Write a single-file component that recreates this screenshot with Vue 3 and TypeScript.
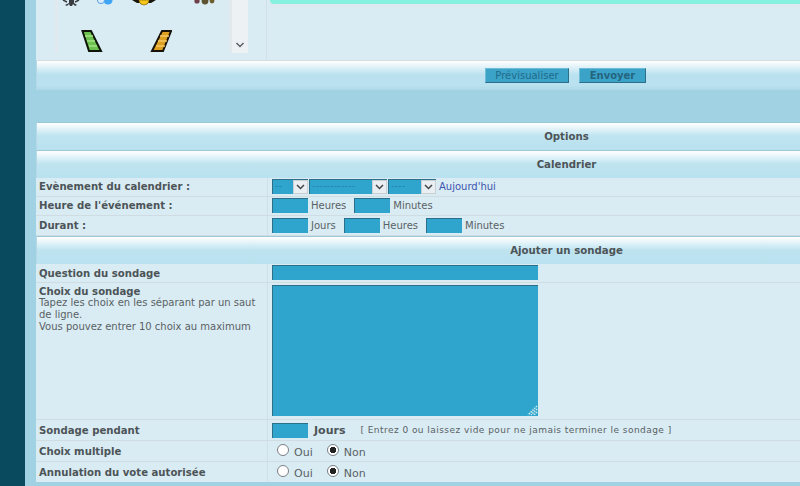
<template>
  <div class="page">
    <aside class="strip"></aside>
    <main class="main">
      <section class="top">
        <div class="smilies">
          <div class="list">
            <div class="icons clipped">
              <svg width="18" height="6" viewBox="0 0 18 6"><path d="M7 0h5v3l3 2-2 1-2-2-1 2H8L7 4 5 6 3 5l4-2z" fill="#3a3d40" /><path d="M1 0l4 2M17 0l-4 2" stroke="#3a3d40" stroke-width="1.4" /></svg>
              <svg class="i2" width="16" height="6" viewBox="0 0 16 6"><circle cx="11" cy="0" r="4.6" fill="#3ea6f5" /><circle cx="4" cy="0" r="3.6" fill="#d8ecfb" stroke="#5a9fe6" /></svg>
              <svg class="i3" width="24" height="6" viewBox="0 0 24 6"><path d="M0 0h24l-5 3H5z" fill="#17140a" /><path d="M7 0h10v1q-1 4-5 4t-5-4z" fill="#f6c81c" stroke="#7a5c08" stroke-width=".7" /></svg>
              <svg class="i4" width="22" height="5" viewBox="0 0 22 5"><circle cx="4" cy="1" r="2.6" fill="#70404a" /><circle cx="12" cy="1" r="3.4" fill="#5d5232" /><circle cx="19" cy="1" r="2.4" fill="#6d5f2c" /></svg>
            </div>
            <div class="icons bars">
              <svg width="22" height="22" viewBox="0 0 22 22">
                <path d="M1.500 1H10L20 21H8z" fill="#6cc04e" stroke="#0e1508" stroke-width="2" />
                <path d="M4 6h8M6 11h8M8 16h8" stroke="#a5e388" stroke-width="1.500" />
              </svg>
              <svg class="b2" width="22" height="22" viewBox="0 0 22 22">
                <path d="M12 1h9L13 21H2z" fill="#dd9f20" stroke="#17120a" stroke-width="2" />
                <path d="M10 6h9M8 11h9M6 16h9" stroke="#f4c765" stroke-width="1.500" />
              </svg>
            </div>
          </div>
          <div class="scroll">
            <svg width="10" height="6" viewBox="0 0 10 6"><path d="M1.500 1 5 4.500 8.500 1" fill="none" stroke="#596168" stroke-width="1.500" /></svg>
          </div>
        </div>
        <div class="top-right"><div class="teal"></div></div>
      </section>

      <section class="actions">
        <button class="btn">Prévisualiser</button>
        <button class="btn send">Envoyer</button>
      </section>

      <div class="gap"></div>

      <h3 class="head">Options</h3>
      <h3 class="head">Calendrier</h3>

      <div class="row r19 up">
        <label class="lab">Evènement du calendrier :</label>
        <div class="val">
          <span class="sel w36"><i>--</i><b><svg width="9" height="6" viewBox="0 0 9 6"><path d="M1 1l3.500 3.500L8 1" fill="none" stroke="#444" stroke-width="1.500" /></svg></b></span>
          <span class="sel w78"><i>------------</i><b><svg width="9" height="6" viewBox="0 0 9 6"><path d="M1 1l3.500 3.500L8 1" fill="none" stroke="#444" stroke-width="1.500" /></svg></b></span>
          <span class="sel w48"><i>----</i><b><svg width="9" height="6" viewBox="0 0 9 6"><path d="M1 1l3.500 3.500L8 1" fill="none" stroke="#444" stroke-width="1.500" /></svg></b></span>
          <a class="today">Aujourd'hui</a>
        </div>
      </div>
      <div class="row r19 up">
        <label class="lab">Heure de l'événement :</label>
        <div class="val">
          <span class="inp"></span><span class="txt">Heures</span>
          <span class="inp after"></span><span class="txt">Minutes</span>
        </div>
      </div>
      <div class="row r20">
        <label class="lab">Durant :</label>
        <div class="val">
          <span class="inp"></span><span class="txt">Jours</span>
          <span class="inp after"></span><span class="txt">Heures</span>
          <span class="inp after"></span><span class="txt">Minutes</span>
        </div>
      </div>

      <h3 class="head">Ajouter un sondage</h3>

      <div class="row r19">
        <label class="lab">Question du sondage</label>
        <div class="val"><span class="inp wide"></span></div>
      </div>
      <div class="row r137">
        <div class="lab stack">
          <label>Choix du sondage</label>
          <p>Tapez les choix en les séparant par un saut<br />de ligne.<br />Vous pouvez entrer 10 choix au maximum</p>
        </div>
        <div class="val top-val">
          <span class="area">
            <svg class="grip" width="11" height="11" viewBox="0 0 11 11"><path d="M10 1 1 10M10 4 4 10M10 7 7 10" stroke="#d8ecf3" stroke-width="1.500" stroke-dasharray="1.500 1" /></svg>
          </span>
        </div>
      </div>
      <div class="row r21">
        <label class="lab">Sondage pendant</label>
        <div class="val">
          <span class="inp"></span><strong class="days">Jours</strong>
          <span class="hint">[ Entrez 0 ou laissez vide pour ne jamais terminer le sondage ]</span>
        </div>
      </div>
      <div class="row" :class="item.cls" v-for="item in radios" :key="item.label">
        <label class="lab">{{ item.label }}</label>
        <div class="val radios">
          <span class="radio"></span><span class="txt rtxt">Oui</span>
          <span class="radio on"></span><span class="txt rtxt">Non</span>
        </div>
      </div>
    </main>
  </div>
</template>

<script setup lang="ts">
const radios: { label: string; cls: string }[] = [
  { label: 'Choix multiple', cls: 'r21' },
  { label: 'Annulation du vote autorisée', cls: 'r20 last' },
]
</script>

<style>
html, body { margin: 0; background: #a0d2e4; overflow: hidden; }
</style>

<style scoped>
.page {
  display: flex;
  width: 800px;
  height: 486px;
  overflow: hidden;
  background: #a0d2e4;
  font-family: "DejaVu Sans", Verdana, sans-serif;
  color: #4d5458;
}
.strip { width: 25px; flex: none; background: #0a4a5f; }
.main { flex: 1; padding-left: 11px; min-width: 0; }

.top { display: flex; height: 60px; background: #daecf3; border-bottom: 1px solid #d5dde1; }
.smilies {
  width: 193px;
  margin-left: 19px;
  display: flex;
  height: 53px;
  flex: none;
}
.list {
  width: 171px;
  border-left: 3px solid #e2e9ee;
  border-right: 3px solid #e2e9ee;
}
.icons { display: flex; }
.clipped { height: 6px; padding-left: 4px; align-items: flex-start; }
.i2 { margin-left: 17px; }
.i3 { margin-left: 19px; }
.i4 { margin-left: 37px; }
.bars { padding: 24px 0 0 23px; }
.b2 { margin-left: 47px; }
.scroll {
  width: 16px;
  flex: none;
  background: #eef1f3;
  display: flex;
  align-items: flex-end;
  justify-content: center;
  padding-bottom: 5px;
  box-sizing: border-box;
}
.top-right { flex: 1; margin-left: 18px; border-left: 1px solid #d3e0e6; padding-left: 3px; }
.teal { height: 4px; background: #86f1df; border-radius: 0 0 0 5px; box-shadow: 0 3px 0 #dfe7f0; }

.actions {
  height: 29px;
  box-sizing: border-box;
  display: flex;
  justify-content: center;
  align-items: flex-start;
  gap: 10px;
  padding: 7px 0 0 294px;
  border-left: 1px solid #b5d9e6;
  background: linear-gradient(#ffffff, #b9e1ef 48%, #b9e1ef 85%, #aed8e8);
}
.btn {
  height: 15px;
  padding: 0;
  font: 10px "DejaVu Sans", Verdana, sans-serif;
  color: #1f6a8a;
  background: #3ba2c8;
  border: 0;
  border-right: 1px solid #2b6f88;
  border-bottom: 1px solid #2b6f88;
  border-top: 1px solid #6fbcd8;
  border-left: 1px solid #6fbcd8;
  width: 84px;
}
.send { width: 67px; font-weight: bold; color: #24657f; }
.gap { height: 32px; }

.head {
  margin: 0;
  height: 28px;
  box-sizing: border-box;
  border-top: 1px solid #9cc8d8;
  border-left: 1px solid #b5d9e6;
  padding: 7px 0 0 296px;
  text-align: center;
  font-size: 10.200px;
  line-height: 14px;
  font-weight: bold;
  color: #4d5458;
  background: linear-gradient(#ffffff, #bfe4f0 48%, #b9e1ef);
}

.row {
  display: grid;
  grid-template-columns: 232px 1fr;
  background: #d9ecf3;
  border-bottom: 1px solid #cfdde3;
  box-sizing: border-box;
}
.r19 { height: 19px; }
.r20 { height: 20px; }
.r21 { height: 21px; }
.r137 { height: 137px; }
.up .lab, .up .val { padding-bottom: 2px; }
.last { border-bottom: 0; }
.lab {
  display: flex;
  align-items: center;
  padding-left: 3px;
  border-right: 1px solid #cfe0e7;
  font-size: 10.150px;
  font-weight: bold;
  color: #4d5458;
  white-space: nowrap;
}
.stack { display: block; padding-top: 2px; line-height: 13px; }
.stack p {
  margin: -1px 0 0;
  font-size: 10px;
  font-weight: normal;
  line-height: 12px;
  color: #5a6165;
}
.val { display: flex; align-items: center; padding-left: 4px; font-size: 10px; color: #5a6165; white-space: nowrap; }
.top-val { align-items: flex-start; padding-top: 2px; }

.sel {
  display: inline-flex;
  height: 15px;
  box-sizing: border-box;
  background: #2fa5cd;
  border-top: 1px solid #2d6f88;
  border-left: 1px solid #2d6f88;
  margin-right: 1px;
  overflow: hidden;
}
.sel i { flex: 1; min-width: 0; font-style: normal; font-size: 9px; letter-spacing: 0.4px; line-height: 13px; padding-left: 2px; color: #1f7fa8; overflow: hidden; }
.sel b { width: 15px; flex: none; display: flex; align-items: center; justify-content: center; background: #e8eef1; border: 1px solid #c8d0d4; box-sizing: border-box; }
.w36 { width: 36px; }
.w78 { width: 78px; }
.w48 { width: 48px; }
.today { margin-left: 2px; color: #3c55b0; font-size: 10px; }

.inp {
  display: inline-block;
  flex: none;
  width: 36px;
  height: 15px;
  box-sizing: border-box;
  background: #2fa5cd;
  border-top: 1px solid #2d6f88;
  border-left: 1px solid #2d6f88;
}
.wide { width: 266px; margin-bottom: 2px; }
.after { margin-left: 8px; }
.txt { margin-left: 3px; }

.area {
  position: relative;
  display: block;
  width: 266px;
  height: 131px;
  box-sizing: border-box;
  background: #2fa5cd;
  border-top: 1px solid #2d6f88;
  border-left: 1px solid #2d6f88;
}
.grip { position: absolute; right: 0; bottom: 0; }

.days { margin-left: 6px; font-size: 11px; color: #4d5458; }
.hint { margin-left: 15px; font-size: 9px; letter-spacing: 0.45px; }

.radios { padding-left: 9px; }
.radio {
  width: 12px;
  height: 12px;
  box-sizing: border-box;
  border: 1px solid #7a7f82;
  border-radius: 50%;
  background: #fff;
  flex: none;
  margin-bottom: 3px;
}
.radio.on { background: radial-gradient(circle, #222 0 3px, #fff 3.500px); margin-left: 14px; }
.rtxt { font-size: 11px; margin-top: 2px; margin-left: 5px; }
</style>
